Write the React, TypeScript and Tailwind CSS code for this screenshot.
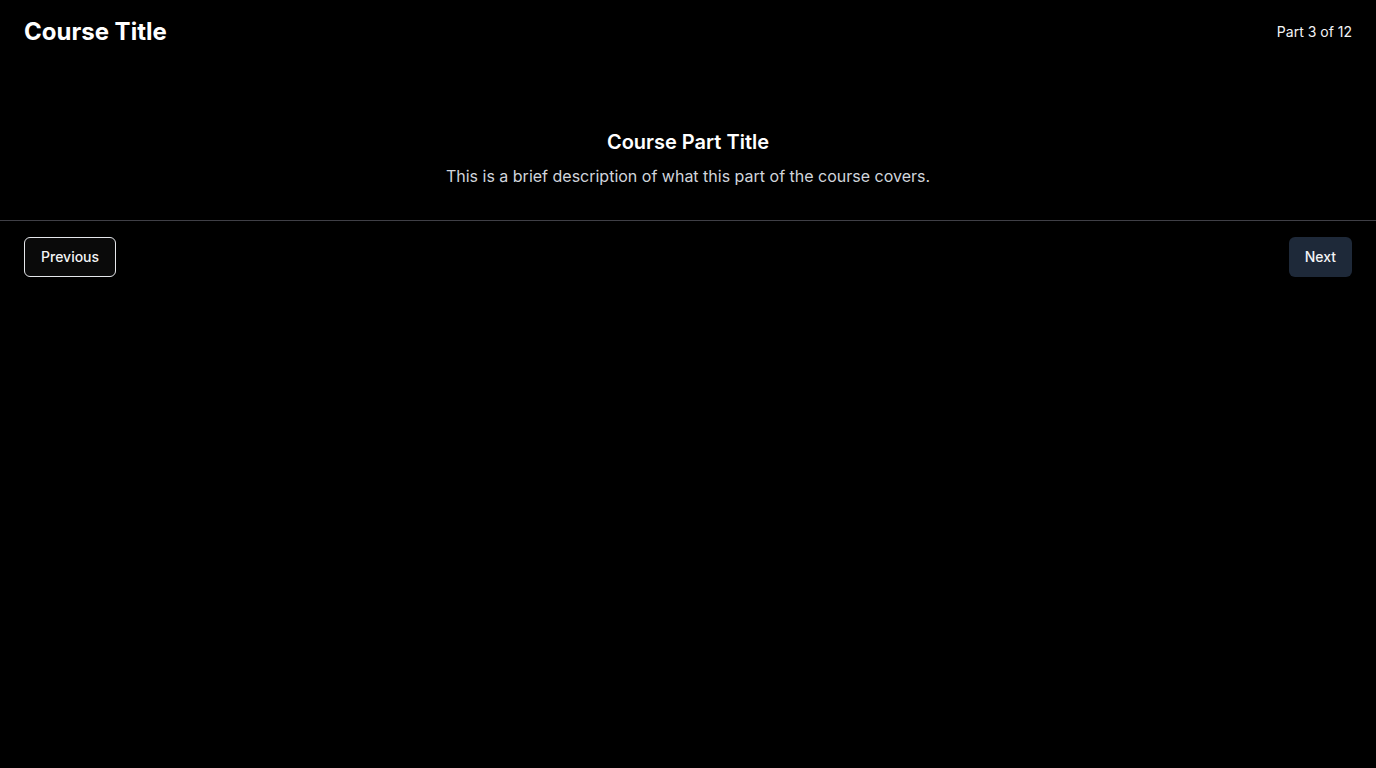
export default function App() {
  return (
    <div
      className="min-h-screen bg-black text-white"
      style={{ fontFamily: "Inter, 'Noto Sans', sans-serif" }}
    >
      {/* Header */}
      <header className="flex items-center justify-between px-6 py-4">
        <h1 className="text-2xl font-bold">Course Title</h1>
        <span className="text-sm text-gray-100">Part 3 of 12</span>
      </header>

      {/* Part content */}
      <main className="flex flex-col items-center pt-16 pb-8 text-center">
        <h2 className="mb-2 text-xl leading-7 font-semibold">Course Part Title</h2>
        <p className="text-base text-gray-300">
          This is a brief description of what this part of the course covers.
        </p>
      </main>

      {/* Navigation */}
      <footer className="flex items-center justify-between border-t border-[#3f3f46] px-6 py-4">
        <button className="h-10 rounded-md border border-gray-200 bg-[#0a0a0a] px-4 text-sm font-medium text-gray-100">
          Previous
        </button>
        <button className="h-10 rounded-md bg-gray-800 px-4 text-sm font-medium text-gray-100">
          Next
        </button>
      </footer>
    </div>
  );
}
